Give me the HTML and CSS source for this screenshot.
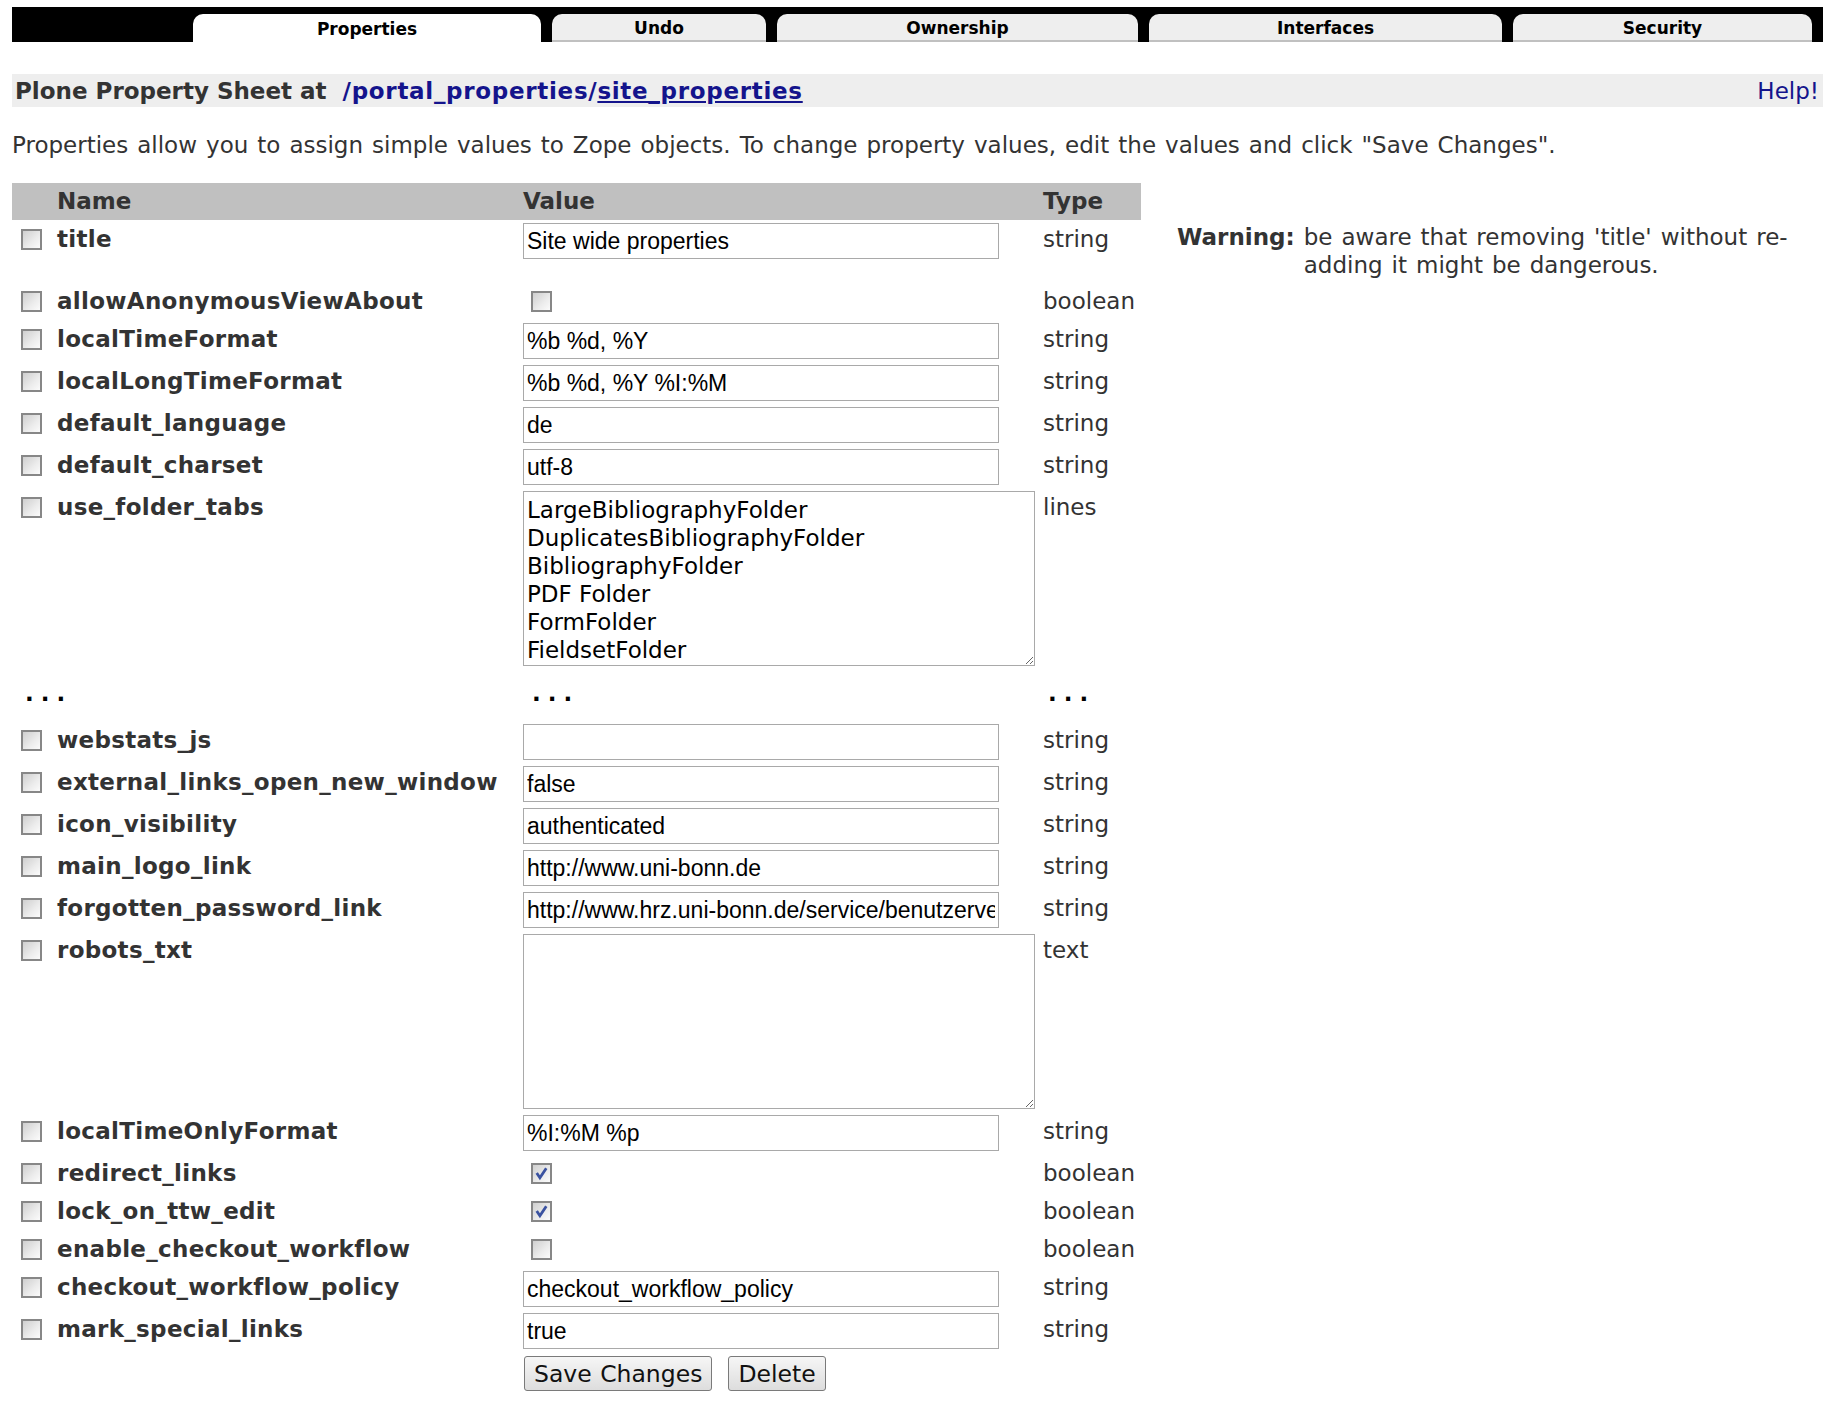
FILE: index.html
```html
<!DOCTYPE html>
<html lang="en">
<head>
    <meta charset="UTF-8">
    <meta name="viewport" content="width=device-width, initial-scale=1.0">
    <title>site_properties - Properties</title>
    <link rel="stylesheet" href="styles.css">
</head>
<body>
    <div class="tabs">
        <div class="tab active" style="width: 348px">Properties</div>
        <div class="tab" style="width: 214px">Undo</div>
        <div class="tab" style="width: 361px">Ownership</div>
        <div class="tab" style="width: 353px">Interfaces</div>
        <div class="tab" style="width: 299px">Security</div>
    </div>

    <div class="sheet-title">
        <span>Plone Property Sheet at&nbsp; <a href="#" class="path">/portal_properties/</a><a href="#" class="current">site_properties</a></span>
        <a href="#" class="help">Help!</a>
    </div>

    <p class="intro">Properties allow you to assign simple values to Zope objects. To change property values, edit the values and click "Save Changes".</p>

    <form id="propertyForm">
        <table class="props">
            <colgroup>
                <col style="width: 38px">
                <col style="width: 470px">
                <col style="width: 520px">
                <col style="width: 101px">
                <col>
            </colgroup>
            <tr>
                <th></th>
                <th>Name</th>
                <th>Value</th>
                <th>Type</th>
            </tr>
            <tr>
                <td><span class="box"></span></td>
                <td class="name">title</td>
                <td><input type="text" value="Site wide properties"></td>
                <td class="type">string</td>
                <td class="warn">
                    <strong>Warning:</strong>
                    <span>be aware that removing 'title' without re-adding it might be dangerous.</span>
                </td>
            </tr>
            <tr>
                <td><span class="box"></span></td>
                <td class="name">allowAnonymousViewAbout</td>
                <td><span class="box value-box"></span></td>
                <td class="type">boolean</td>
            </tr>
            <tr>
                <td><span class="box"></span></td>
                <td class="name">localTimeFormat</td>
                <td><input type="text" value="%b %d, %Y"></td>
                <td class="type">string</td>
            </tr>
            <tr>
                <td><span class="box"></span></td>
                <td class="name">localLongTimeFormat</td>
                <td><input type="text" value="%b %d, %Y %I:%M"></td>
                <td class="type">string</td>
            </tr>
            <tr>
                <td><span class="box"></span></td>
                <td class="name">default_language</td>
                <td><input type="text" value="de"></td>
                <td class="type">string</td>
            </tr>
            <tr>
                <td><span class="box"></span></td>
                <td class="name">default_charset</td>
                <td><input type="text" value="utf-8"></td>
                <td class="type">string</td>
            </tr>
            <tr>
                <td><span class="box"></span></td>
                <td class="name">use_folder_tabs</td>
                <td><textarea>LargeBibliographyFolder
DuplicatesBibliographyFolder
BibliographyFolder
PDF Folder
FormFolder
FieldsetFolder</textarea></td>
                <td class="type">lines</td>
            </tr>
            <tr class="more">
                <td>...</td>
                <td></td>
                <td class="more-value">...</td>
                <td>...</td>
            </tr>
            <tr>
                <td><span class="box"></span></td>
                <td class="name">webstats_js</td>
                <td><input type="text" value=""></td>
                <td class="type">string</td>
            </tr>
            <tr>
                <td><span class="box"></span></td>
                <td class="name">external_links_open_new_window</td>
                <td><input type="text" value="false"></td>
                <td class="type">string</td>
            </tr>
            <tr>
                <td><span class="box"></span></td>
                <td class="name">icon_visibility</td>
                <td><input type="text" value="authenticated"></td>
                <td class="type">string</td>
            </tr>
            <tr>
                <td><span class="box"></span></td>
                <td class="name">main_logo_link</td>
                <td><input type="text" value="http://www.uni-bonn.de"></td>
                <td class="type">string</td>
            </tr>
            <tr>
                <td><span class="box"></span></td>
                <td class="name">forgotten_password_link</td>
                <td><input type="text" value="http://www.hrz.uni-bonn.de/service/benutzerverwaltung"></td>
                <td class="type">string</td>
            </tr>
            <tr>
                <td><span class="box"></span></td>
                <td class="name">robots_txt</td>
                <td><textarea></textarea></td>
                <td class="type">text</td>
            </tr>
            <tr>
                <td><span class="box"></span></td>
                <td class="name">localTimeOnlyFormat</td>
                <td><input type="text" value="%I:%M %p"></td>
                <td class="type">string</td>
            </tr>
            <tr>
                <td><span class="box"></span></td>
                <td class="name">redirect_links</td>
                <td><span class="box value-box"><svg viewBox="0 0 16 16"><path d="M3.5 7.5 L6.5 12 L12.5 3"/></svg></span></td>
                <td class="type">boolean</td>
            </tr>
            <tr>
                <td><span class="box"></span></td>
                <td class="name">lock_on_ttw_edit</td>
                <td><span class="box value-box"><svg viewBox="0 0 16 16"><path d="M3.5 7.5 L6.5 12 L12.5 3"/></svg></span></td>
                <td class="type">boolean</td>
            </tr>
            <tr>
                <td><span class="box"></span></td>
                <td class="name">enable_checkout_workflow</td>
                <td><span class="box value-box"></span></td>
                <td class="type">boolean</td>
            </tr>
            <tr>
                <td><span class="box"></span></td>
                <td class="name">checkout_workflow_policy</td>
                <td><input type="text" value="checkout_workflow_policy"></td>
                <td class="type">string</td>
            </tr>
            <tr>
                <td><span class="box"></span></td>
                <td class="name">mark_special_links</td>
                <td><input type="text" value="true"></td>
                <td class="type">string</td>
            </tr>
            <tr>
                <td></td>
                <td></td>
                <td class="actions">
                    <button type="submit">Save Changes</button>
                    <button type="button">Delete</button>
                </td>
                <td></td>
            </tr>
        </table>
    </form>
</body>
</html>
```

FILE: styles.css
```css
body {
    margin: 7px 9px 0 12px;
    font-family: "DejaVu Sans", Verdana, sans-serif;
    font-size: 23px;
    word-spacing: 1.7px;
    color: #333;
    background: #fff;
}
a {
    color: #14148c;
}

/* management tabs */
.tabs {
    display: flex;
    gap: 11px;
    background: #000;
    padding: 7px 11px 0 181px;
}
.tab {
    box-sizing: border-box;
    height: 28px;
    padding-top: 3px;
    border-radius: 10px 10px 0 0;
    background: #eee;
    border-bottom: 2px solid #c0c0c0;
    color: #000;
    font-size: 17px;
    font-weight: bold;
    line-height: 23px;
    text-align: center;
    word-spacing: normal;
}
.tab.active {
    background: #fff;
    border-bottom: 0;
    line-height: 25px;
}

/* sheet heading */
.sheet-title {
    display: flex;
    justify-content: space-between;
    align-items: center;
    height: 33px;
    margin-top: 32px;
    padding: 0 4px 0 3px;
    background: #eee;
    font-weight: bold;
    word-spacing: normal;
}
.sheet-title .path,
.sheet-title .current {
    letter-spacing: 0.7px;
}
.sheet-title .path {
    text-decoration: none;
}
.sheet-title .help {
    font-weight: normal;
    text-decoration: none;
}
.intro {
    margin: 24px 0 24px 0;
    line-height: 28px;
}

/* property table */
.props {
    width: 1811px;
    table-layout: fixed;
    border-collapse: collapse;
}
.props th {
    height: 37px;
    padding: 0 0 0 3px;
    background: #c0c0c0;
    text-align: left;
    line-height: 37px;
}
.props th:nth-child(2) {
    padding-left: 7px;
}
.props td {
    padding: 3px 0 3px 3px;
    vertical-align: top;
    line-height: 32px;
    white-space: nowrap;
}
.props td:first-child {
    padding-left: 9px;
}
.props td.name {
    padding-left: 7px;
    font-weight: bold;
    letter-spacing: 0.3px;
}
.box {
    display: block;
    box-sizing: border-box;
    width: 21px;
    height: 21px;
    margin-top: 6px;
    border: 2px solid #878787;
    background: linear-gradient(135deg, #cfcfcf, #ececec 60%, #fbfbfb);
}
.value-box {
    margin-left: 8px;
}
.box svg {
    display: block;
    width: 17px;
    height: 17px;
}
.box svg path {
    fill: none;
    stroke: #3a52a0;
    stroke-width: 2.6;
}
input[type="text"] {
    display: block;
    box-sizing: border-box;
    width: 476px;
    height: 36px;
    margin: 0;
    padding: 0 3px;
    border: 1px solid #a9a9a9;
    font-family: "Liberation Sans", Arial, sans-serif;
    font-size: 23px;
    word-spacing: normal;
    color: #000;
}
textarea {
    display: block;
    box-sizing: border-box;
    width: 512px;
    height: 175px;
    margin: 0;
    padding: 4px 3px;
    border: 1px solid #a9a9a9;
    font-family: "DejaVu Sans", Verdana, sans-serif;
    font-size: 23px;
    line-height: 28px;
    color: #000;
    overflow: hidden;
}
.props td.warn {
    display: flex;
    gap: 9px;
    padding-left: 36px;
    line-height: 28px;
    white-space: normal;
}
.warn span {
    width: 520px;
}
.props tr.more td {
    line-height: 42px;
    font-weight: bold;
    letter-spacing: 7px;
    color: #000;
}
.props tr.more td:first-child {
    padding-left: 13px;
}
.props td.more-value {
    padding-left: 12px;
}
.props tr.more td:last-child {
    padding-left: 8px;
}
.props tr.more td {
    padding-bottom: 7px;
}
.props td.actions {
    display: flex;
    gap: 16px;
    padding-top: 4px;
    padding-left: 4px;
}
button {
    height: 35px;
    margin: 0;
    padding: 0 9px;
    border: 1px solid #7a7a7a;
    border-radius: 3px;
    background: linear-gradient(#f6f6f6, #dddddd);
    font-family: "DejaVu Sans", Verdana, sans-serif;
    font-size: 23.5px;
    word-spacing: 1px;
    color: #111;
}
```
